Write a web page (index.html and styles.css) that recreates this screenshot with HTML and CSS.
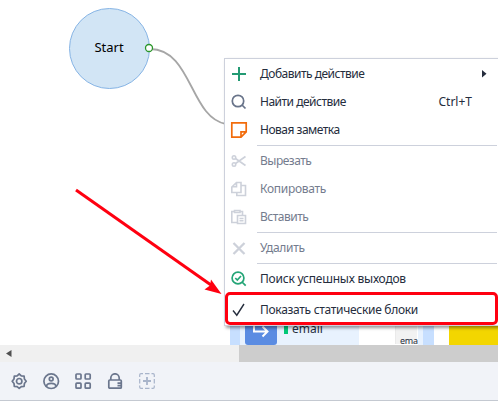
FILE: index.html
```html
<!DOCTYPE html>
<html lang="ru">
<head>
<meta charset="utf-8">
<title>Сценарий</title>
<link rel="stylesheet" href="styles.css">
</head>
<body>
<main class="canvas">
  <svg class="wires" width="498" height="345" fill="none">
    <path d="M150 49C192 49 190 118 226 124" stroke="#a6a6a6" stroke-width="1.8"/>
    <circle cx="109.500" cy="48.500" r="40" fill="#d2e5f5" stroke="#86b4e5"/>
    <circle cx="149" cy="48" r="3.500" fill="#fff" stroke="#2a962a" stroke-width="1.300"/>
  </svg>
  <span class="start">Start</span>
  <section class="block">
    <div class="block-icon">
      <svg width="32" height="32" fill="none" stroke="#fff" stroke-width="2"><path d="M9 9v9.500h13M17.500 13.500l5 5-5 5"/></svg>
    </div>
    <i class="mark"></i>
    <span class="name">email</span>
    <span class="chip">ema</span>
  </section>
  <div class="note"></div>
</main>
<div class="scrollbar">
  <svg class="scroll-arrow" width="6" height="8"><path d="M5.500 0v7L0 3.500z" fill="#505050"/></svg>
  <div class="thumb"></div>
</div>
<footer class="toolbar">
  <svg width="18" height="18" fill="none" stroke="#6b768d" stroke-width="1.700"><path stroke-linejoin="round" d="M6.100 2.800L8.200 1l2.100 1.800 2.800.3.300 2.800 1.800 2.300-1.800 2.300-.3 2.800-2.800.3L8.200 15.400l-2.100-1.800-2.800-.3-.3-2.800L1.200 8.200 3 5.900l.3-2.800z"/><circle cx="8.200" cy="8.200" r="2.700"/></svg>
  <svg width="18" height="18" fill="none" stroke="#6b768d" stroke-width="1.700"><circle cx="8.200" cy="8.200" r="7.300"/><circle cx="8.200" cy="6" r="1.900"/><path d="M3.300 13.500c.5-4.300 9.300-4.300 9.800 0"/></svg>
  <svg width="18" height="18" fill="none" stroke="#6b768d" stroke-width="1.700"><rect x="1" y="1" width="5" height="5" rx=".8"/><rect x="10.200" y="1" width="5" height="5" rx=".8"/><rect x="1" y="10.200" width="5" height="5" rx=".8"/><rect x="10.200" y="10.200" width="5" height="5" rx=".8"/></svg>
  <svg width="18" height="18" fill="none" stroke="#6b768d" stroke-width="1.700"><rect x="1.800" y="7" width="12.500" height="8.200" rx="1"/><path d="M3.800 7V5a4.200 4.200 0 0 1 8.400 0V7M10.500 10.200H14M10.500 12.700H14"/></svg>
  <svg width="18" height="18" fill="none" stroke="#a8b4ca"><path stroke-width="1.200" d="M.7 4V2Q.7.700 2 .7h2M6 .7h4.500M12.500 .7h1.500q1.300 0 1.300 1.300v2M15.300 6v4.500M15.300 12.500v1.500q0 1.300-1.300 1.300H12.500M10.500 15.300H6M4 15.300H2Q.7 15.300.7 14V12.500M.7 10.500V6"/><path stroke-width="1.800" d="M8 4v8M4 8h8"/></svg>
</footer>

<nav class="menu">
  <div class="item tight"><svg width="20" height="20" stroke="#239a73" stroke-width="2"><path d="M10 3v14M3 10h14"/></svg><span>Добавить действие</span><svg class="more" width="5" height="8"><path d="M0 0l4.500 3.700L0 7.400z" fill="#252d3d"/></svg></div>
  <div class="item tight"><svg width="20" height="20" fill="none" stroke="#69748a" stroke-width="1.700"><circle cx="9" cy="9" r="5.700"/><path d="M13 13l3.500 3.500"/></svg><span>Найти действие</span><kbd>Ctrl+T</kbd></div>
  <div class="item tight"><svg width="20" height="20" fill="none" stroke="#f26c0c" stroke-width="1.700"><path d="M2.800 2.800h14.400v9l-5.200 5.400H2.800zM12 17v-5.200h5"/></svg><span>Новая заметка</span></div>
  <hr>
  <div class="item off tight"><svg width="20" height="20" fill="none" stroke="#cdd1da" stroke-width="1.600"><circle cx="5" cy="6.500" r="1.700"/><circle cx="5" cy="13.500" r="1.700"/><path d="M6.500 7.500L16.500 14.500M6.500 12.500L16.500 5.500"/></svg><span>Вырезать</span></div>
  <div class="item off"><svg width="20" height="20" fill="none" stroke="#cdd1da" stroke-width="1.600"><path d="M7.500 3.500h4.500v10h-9.200V8zM7.500 3.500v4.300H3M12.500 6.500h4v10H7.800v-3"/></svg><span>Копировать</span></div>
  <div class="item off tight"><svg width="20" height="20" fill="none" stroke="#cdd1da" stroke-width="1.600"><path d="M8 15.500H2.800V4.500H5.500M11 4.500h2.500V8M5.500 3.500h5.500v2H5.500z"/><path d="M8.500 8.500h8v8h-8zM10.500 11.500h4M10.500 13.800h4"/></svg><span>Вставить</span></div>
  <hr>
  <div class="item off"><svg width="20" height="20" stroke="#cdd1da" stroke-width="2.300"><path d="M4.500 5l11 11M15.500 5l-11 11"/></svg><span>Удалить</span></div>
  <hr>
  <div class="item"><svg width="20" height="20" fill="none" stroke="#24a577" stroke-width="1.700"><circle cx="9" cy="9" r="5.900"/><path d="M13 13l3.700 3.700M6.300 9l2 2 3.700-4"/></svg><span>Поиск успешных выходов</span></div>
  <div class="item last"><svg width="20" height="20" fill="none" stroke="#252d3d" stroke-width="1.400"><path d="M4 10.500l3.800 4.700L15 4"/></svg><span>Показать статические блоки</span></div>
</nav>
<div class="highlight"></div>
<svg class="pointer" width="160" height="120"><path d="M6 5L141 100" stroke="#ff0010" stroke-width="3"/><path d="M151.500 109L134.500 104.500 140 100.500 141 94.500z" fill="#ff0010"/></svg>
</body>
</html>
```

FILE: styles.css
```css
* { box-sizing: border-box; }
body {
  margin: 0;
  width: 498px;
  height: 402px;
  overflow: hidden;
  position: relative;
  display: flex;
  flex-direction: column;
  background: #fff;
  font: 12px/28px "Noto Sans", "Open Sans", sans-serif;
  color: #252d3d;
}
svg { display: block; flex: none; }
.canvas { position: relative; height: 345px; flex: none; overflow: hidden; }
.wires { position: absolute; left: 0; top: 0; }
.start {
  position: absolute;
  left: 69px;
  top: 33px;
  width: 80px;
  text-align: center;
  font-size: 13px;
  color: #000;
}
.block {
  position: absolute;
  left: 230px;
  top: 300px;
  width: 204px;
  height: 60px;
  border: solid #c7dfff;
  border-width: 0 11px 0 10px;
  background: linear-gradient(90deg, #e8f2fe 119px, #fff 119px 178px, #e8f2fe 178px);
}
.block-icon {
  position: absolute;
  left: 5px;
  top: 13px;
  width: 32px;
  height: 32px;
  border-radius: 3px;
  background: #5b8ce2;
}
.mark { position: absolute; left: 44px; top: 22px; width: 4px; height: 12px; background: #00c878; }
.name { position: absolute; left: 52px; top: 15px; }
.chip {
  position: absolute;
  left: 155px;
  top: 26px;
  width: 22px;
  padding-left: 4px;
  height: 18px;
  line-height: 30px;
  font-size: 9px;
  letter-spacing: -0.3px;
  background: #f2f2f2;
  border-left: 1px solid #eaeaea;
}
.note { position: absolute; left: 449px; top: 300px; width: 49px; height: 45px; background: #f3d600; }
.scrollbar { display: flex; align-items: center; height: 17px; flex: none; background: #f0f0f0; }
.scroll-arrow { margin-left: 6px; }
.thumb { margin-left: auto; width: 259px; height: 17px; background: #cdcdcd; }
.toolbar {
  display: flex;
  gap: 14px;
  height: 39px;
  padding: 11px 0 0 11px;
  flex: none;
  background: #f1f3f8;
  border-bottom: 1px solid #c4c9d1;
}
.menu {
  position: absolute;
  left: 224px;
  top: 58px;
  width: 274px;
  height: 268px;
  padding-top: 1px;
  background: #fff;
  border: 1px solid #cdd1dc;
  border-right: 0;
  box-shadow: 2px 2px 3px #0006;
}
.item { display: flex; align-items: center; height: 28px; padding-left: 4px; }
.item span { margin-left: 11px; white-space: nowrap; letter-spacing: -0.3px; }
.item.tight span { letter-spacing: -0.5px; }
.item:nth-last-child(2) span { letter-spacing: -0.22px; }
.item.off { color: #747c8e; }
.last { margin-top: 3px; }
.menu hr { width: 240px; margin: 1px 0 1px 32px; border: 0; border-top: 1px solid #cdd1dc; }
kbd { margin: 0 26px 0 auto; font: inherit; }
.more { margin: 0 11px 0 auto; }
.highlight {
  position: absolute;
  left: 225px;
  top: 292px;
  width: 273px;
  height: 33px;
  border: 3px solid #ff0010;
  border-radius: 5px;
}
.pointer { position: absolute; left: 70px; top: 185px; }
```
